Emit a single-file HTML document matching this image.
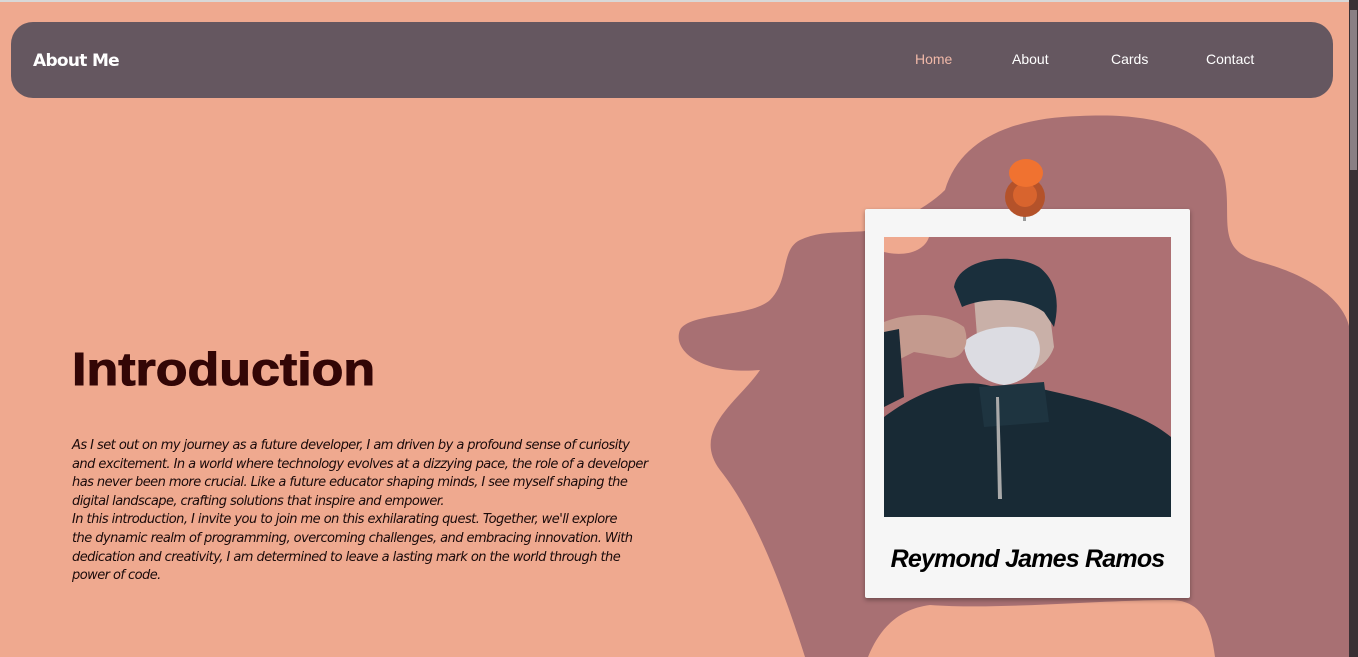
<!DOCTYPE html>
<html><head><meta charset="utf-8"><style>
*{margin:0;padding:0;box-sizing:border-box}
body{width:1358px;height:657px;overflow:hidden;background:#efa98f;font-family:"Liberation Sans",sans-serif;position:relative}
.top{position:absolute;left:0;top:0;width:1358px;height:2px;background:#d8d8d8}
.sb{position:absolute;right:0;top:0;width:9px;height:657px;background:#3a3034}
.sb i{position:absolute;left:1px;top:10px;width:7px;height:160px;background:#8a7f84}
nav{position:absolute;left:11px;top:22px;width:1322px;height:76px;background:#655760;border-radius:22px}
nav b{position:absolute;left:22px;top:29px;color:#fff;font-size:17px;font-family:"DejaVu Sans",sans-serif;font-weight:bold;letter-spacing:-0.7px}
nav span{position:absolute;top:29px;color:#fff;font-size:14px}
h1{position:absolute;left:72px;top:342px;font-size:46px;font-weight:900;color:#330606;transform:scaleX(1.13);transform-origin:left;-webkit-text-stroke:1px #330606}
p{position:absolute;left:72px;top:437px;white-space:nowrap;font-size:13px;line-height:18.6px;font-style:italic;color:#1a0a0a;font-family:"DejaVu Sans",sans-serif;letter-spacing:-0.55px}
.frame{position:absolute;left:865px;top:209px;width:325px;height:389px;background:#f6f6f6;box-shadow:0 2px 5px rgba(0,0,0,.35);border-radius:2px}
.photo{position:absolute;left:19px;top:28px;width:287px;height:280px;background:#ad7073;overflow:hidden}
.name{position:absolute;left:0;width:325px;top:336px;text-align:center;font-size:25px;font-weight:bold;font-style:italic;font-family:"Liberation Sans",sans-serif;color:#000;letter-spacing:-0.8px}
</style></head><body>
<div class="top"></div>
<svg style="position:absolute;left:0;top:0" width="1358" height="657">
<path fill="#a87073" d="M945 190 C960 140 1010 118 1080 116 C1160 112 1215 130 1225 180 C1232 220 1215 250 1260 262 C1310 275 1345 300 1350 330 L1350 657 L1215 657 C1210 620 1200 600 1170 600 C1100 600 1000 610 930 605 C890 610 875 640 868 657 L805 657 C790 610 760 520 720 470 C690 430 740 400 760 370 C700 375 672 350 680 330 C690 312 750 318 770 300 C790 280 780 250 800 240 C830 225 870 240 900 220 C920 210 935 200 945 190Z"/>
</svg>
<nav><b>About Me</b><span style="left:904px;color:#f0b8a8">Home</span><span style="left:1001px">About</span><span style="left:1100px">Cards</span><span style="left:1195px">Contact</span></nav>
<h1>Introduction</h1>
<p>As I set out on my journey as a future developer, I am driven by a profound sense of curiosity<br>and excitement. In a world where technology evolves at a dizzying pace, the role of a developer<br>has never been more crucial. Like a future educator shaping minds, I see myself shaping the<br>digital landscape, crafting solutions that inspire and empower.<br>In this introduction, I invite you to join me on this exhilarating quest. Together, we'll explore<br>the dynamic realm of programming, overcoming challenges, and embracing innovation. With<br>dedication and creativity, I am determined to leave a lasting mark on the world through the<br>power of code.</p>
<div class="frame">
<div class="photo"><svg width="287" height="280">
<path fill="#efa98f" d="M0 0 L45 0 C40 15 20 20 0 15Z"/>
<path fill="#182a35" d="M0 180 C40 150 80 140 110 150 L150 150 C190 160 250 170 287 200 L287 280 L0 280Z"/>
<path fill="#1e3440" d="M95 150 L160 145 L165 185 L100 190Z"/>
<path fill="#c9b0a8" d="M90 60 C95 40 150 40 165 70 L170 110 C160 140 120 145 95 125Z"/>
<path fill="#dcdce2" d="M80 105 C95 90 130 85 150 95 C165 115 150 145 120 148 C95 145 80 125 80 105Z"/>
<path fill="#1a2f3c" d="M70 50 C75 20 130 15 155 30 C175 45 175 70 170 90 L160 75 C140 60 100 60 78 70Z"/>
<path fill="#c49a8e" d="M0 85 C25 75 60 75 80 90 C88 110 75 125 60 120 L30 115 L0 130Z"/>
<path fill="#1a2a35" d="M0 95 L15 92 L20 160 L0 170Z"/>
<path fill="#aaa" d="M112 160 L115 160 L118 262 L114 262Z"/>
</svg></div>
<div class="name">Reymond James Ramos</div>
</div>
<svg style="position:absolute;left:1000px;top:155px" width="50" height="70">
<rect x="23" y="40" width="3" height="26" fill="#999"/>
<circle cx="25" cy="42" r="20" fill="#b4522a"/>
<circle cx="25" cy="40" r="12" fill="#d8642e"/>
<ellipse cx="26" cy="18" rx="17" ry="14" fill="#f07230"/>
</svg>
<div class="sb"><i></i></div>
</body></html>
